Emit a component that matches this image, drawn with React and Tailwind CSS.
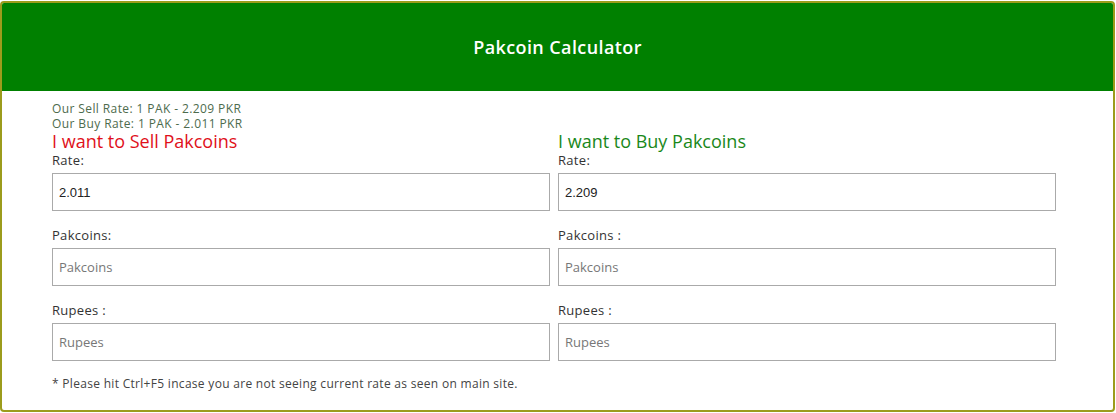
import React from "react";

const font = { fontFamily: "'Open Sans', Lato, sans-serif" };

const Field = ({ label, value, placeholder, first }) => (
  <div className={first ? "" : "mt-[15px]"}>
    <div className="text-[13px] leading-[18px] tracking-[0.3px] text-[#333]">{label}</div>
    <input
      type="text"
      defaultValue={value}
      placeholder={placeholder}
      className="mt-1 block h-[38px] w-full border border-[#aaa] bg-white px-[6px] text-[13px] text-[#222] outline-none placeholder:text-[#777]"
      style={
        value
          ? { fontFamily: "'Liberation Sans', Arial, sans-serif" }
          : font
      }
    />
  </div>
);

const Column = ({ title, color, rate, coinLabel, rupeeLabel }) => (
  <div className="w-[498px]">
    <h2 className={`text-[18px] leading-[20px] ${color}`}>{title}</h2>
    <Field label="Rate:" value={rate} first />
    <Field label={coinLabel} placeholder="Pakcoins" />
    <Field label={rupeeLabel} placeholder="Rupees" />
  </div>
);

export default function App() {
  return (
    <div className="bg-white pt-px" style={font}>
      <div className="h-[411px] w-[1115px] overflow-hidden rounded-[4px] border-2 border-[#9c9c1c]">
        <div className="flex h-[88px] items-center justify-center bg-[#008000]">
          <h1 className="text-[18px] font-semibold tracking-[0.4px] text-white">Pakcoin Calculator</h1>
        </div>
        <div className="pl-[50px] pt-[10px]">
          <div className="text-[12px] leading-[15px] tracking-[0.4px] text-[#4d6b4d]">
            <p>Our Sell Rate: 1 PAK - 2.209 PKR</p>
            <p>Our Buy Rate: 1 PAK - 2.011 PKR</p>
          </div>
          <div className="flex gap-2">
            <Column
              title="I want to Sell Pakcoins"
              color="text-[#e0101a]"
              rate="2.011"
              coinLabel="Pakcoins:"
              rupeeLabel="Rupees :"
            />
            <Column
              title="I want to Buy Pakcoins"
              color="text-[#1a881a]"
              rate="2.209"
              coinLabel="Pakcoins :"
              rupeeLabel="Rupees :"
            />
          </div>
          <p className="mt-[15px] text-[12px] leading-[15px] tracking-[0.3px] text-[#444]">
            * Please hit Ctrl+F5 incase you are not seeing current rate as seen on main site.
          </p>
        </div>
      </div>
    </div>
  );
}
